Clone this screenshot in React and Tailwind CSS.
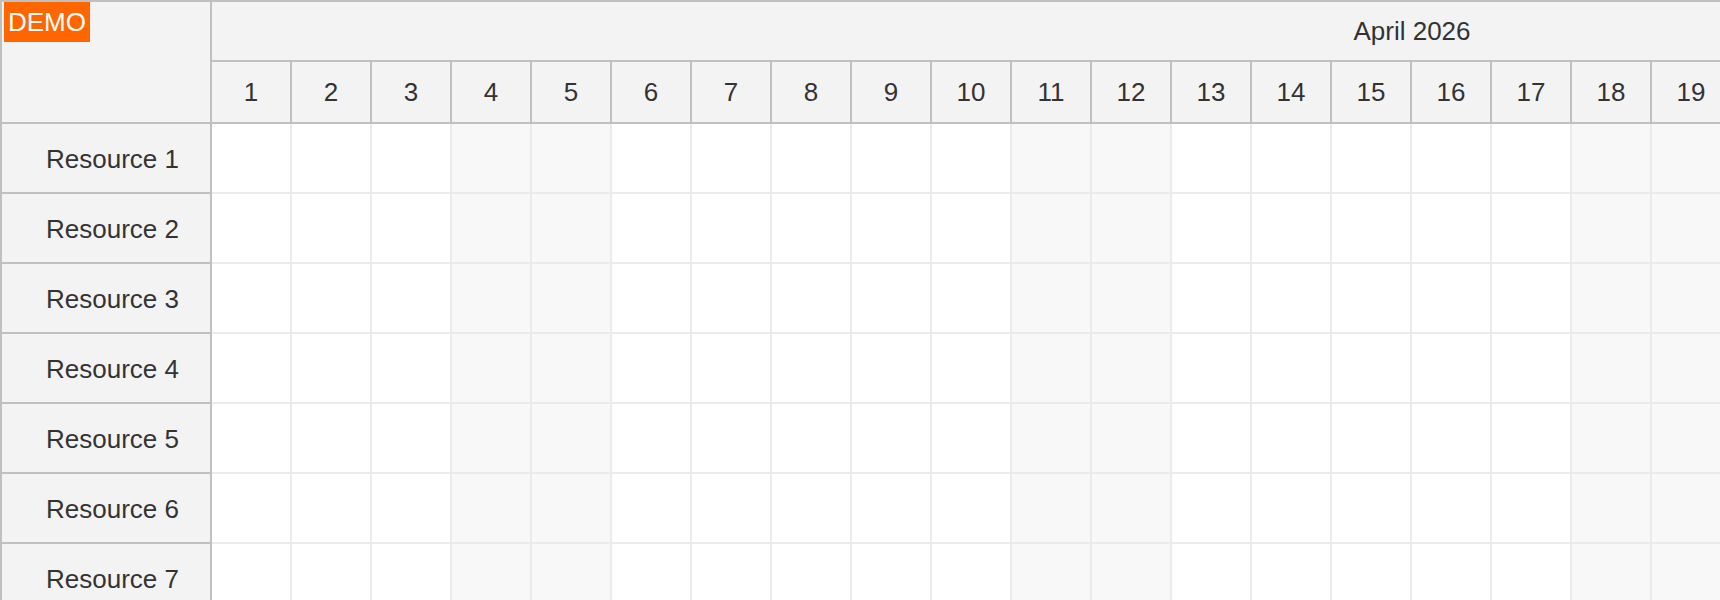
import React from "react";

const DAYS = Array.from({ length: 30 }, (_, i) => i + 1);
const RESOURCES = Array.from({ length: 8 }, (_, i) => "Resource " + (i + 1));

// April 2026 starts on a Wednesday
const isWeekend = (d) => {
    const dow = (d + 1) % 7; // 0 = Monday
    return dow === 5 || dow === 6;
};

export default function App() {
    return (
        <div className="w-[1720px] h-[600px] overflow-hidden bg-white text-[#333] text-[26px] leading-none" style={{ fontFamily: '"Liberation Sans", Arial, sans-serif' }}>
            <div className="flex border-t-2 border-l-2 border-[#c0c0c0] w-max">
                {/* row headers */}
                <div className="flex flex-col w-[210px] shrink-0">
                    <div className="relative h-[122px] bg-[#f3f3f3] border-r-2 border-b-2 border-[#c0c0c0]">
                        <div className="absolute left-[2px] top-0 h-[40px] px-[4px] flex items-center bg-[#ff6600] text-white text-[26px]">
                            DEMO
                        </div>
                    </div>
                    {RESOURCES.map((r) =>
                        <div key={r} className="h-[70px] flex items-center pl-[44px] pt-[2px] bg-[#f3f3f3] border-r-2 border-b-2 border-[#c0c0c0]">
                            {r}
                        </div>)}
                </div>

                {/* timeline */}
                <div className="flex flex-col">
                    <div className="h-[60px] w-[2400px] flex items-center justify-center bg-[#f3f3f3] border-b-2 border-[#c0c0c0]">
                        April 2026
                    </div>
                    <div className="flex h-[62px] bg-[#f3f3f3] border-b-2 border-[#c0c0c0]">
                        {DAYS.map((d) =>
                            <div key={d} className="w-[80px] shrink-0 flex items-center justify-center border-r-2 border-[#c0c0c0]">
                                {d}
                            </div>)}
                    </div>
                    {RESOURCES.map((r) =>
                        <div key={r} className="flex h-[70px]">
                            {DAYS.map((d) =>
                                <div key={d} className={"w-[80px] shrink-0 border-r-2 border-b-2 border-[#ebebeb] " + (isWeekend(d) ? "bg-[#f8f8f8]" : "bg-white")} />)}
                        </div>)}
                </div>
            </div>
        </div>
    );
}
